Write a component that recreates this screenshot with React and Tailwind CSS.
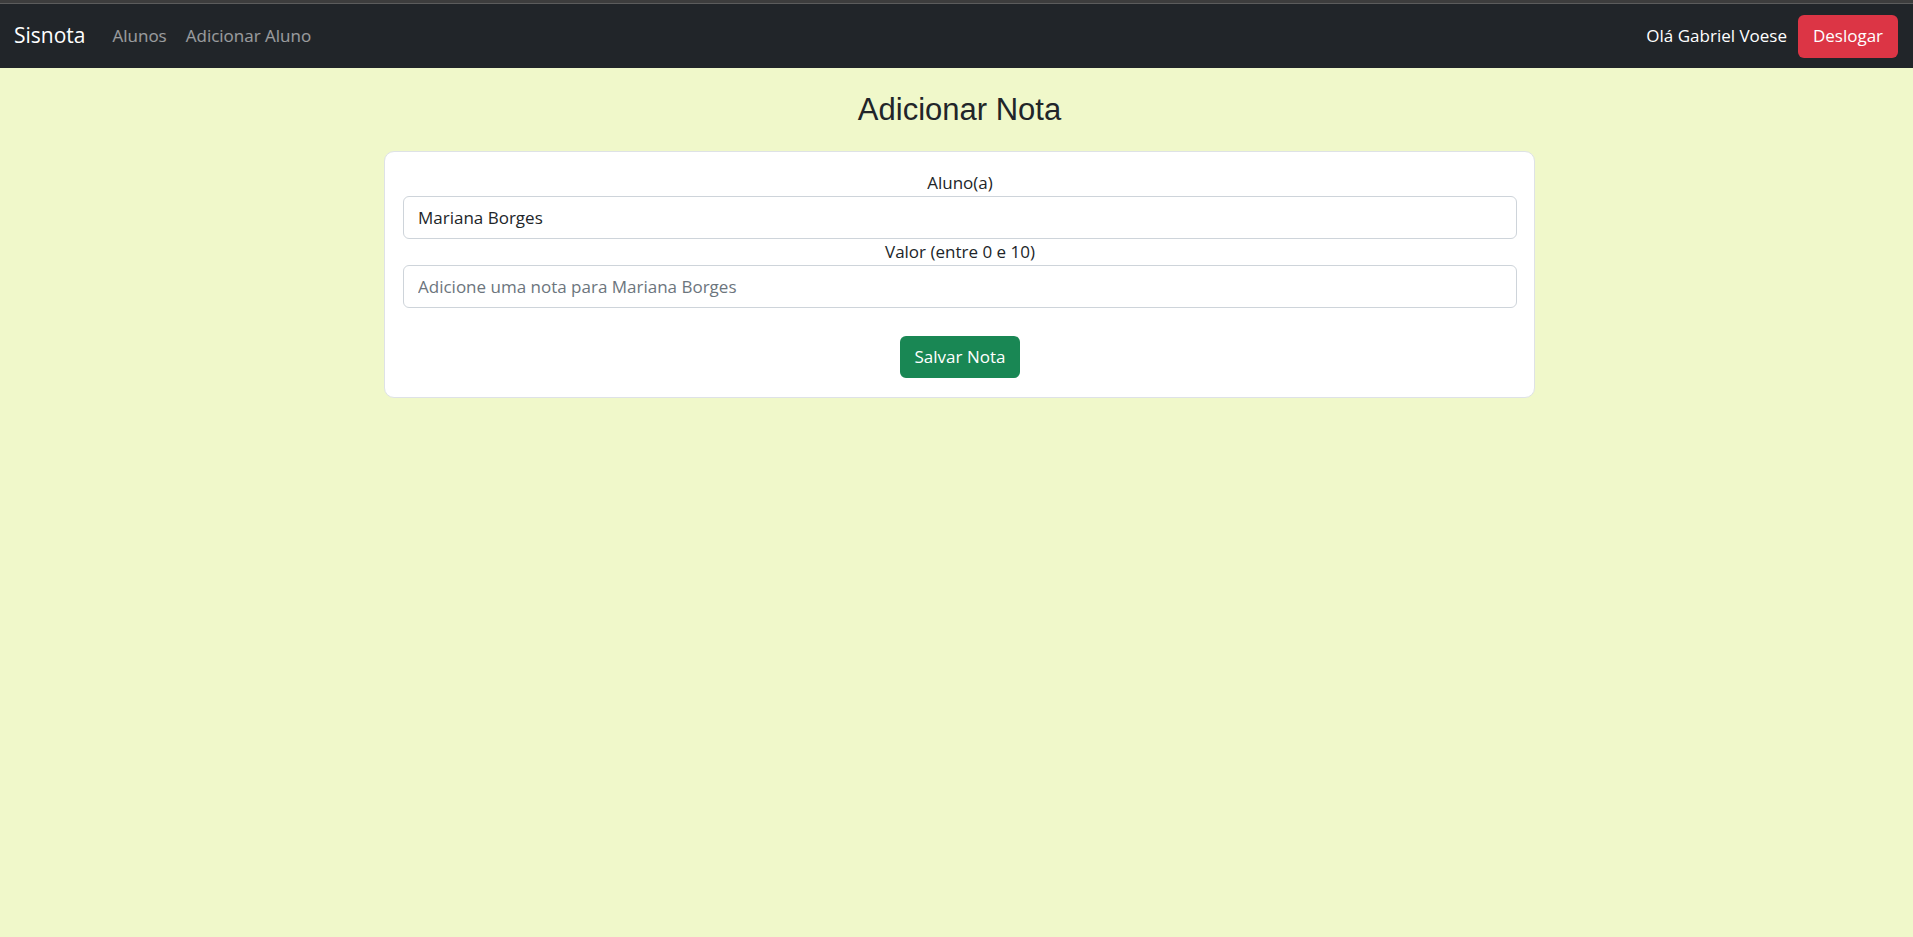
import React from 'react';

const body = { fontFamily: '"Open Sans", "Noto Sans", sans-serif' };

const Navbar = () => (
  <div>
    <div className="h-[3px] bg-[#3d3d3d]" />
    <div className="h-px bg-[#5c5c5c]" />
    <nav className="h-[64px] bg-[#212529] flex items-center justify-between pl-[14px] pr-[15px]">
      <div className="flex items-center">
        <span className="text-[21px] text-white mr-[27px]">Sisnota</span>
        <a className="text-[17px] text-white/55 mr-[19px]">Alunos</a>
        <a className="text-[17px] text-white/55">Adicionar Aluno</a>
      </div>
      <div className="flex items-center">
        <span className="text-[17px] text-white mr-[11px]">Olá Gabriel Voese</span>
        <button className="h-[43px] w-[100px] rounded-[6px] bg-[#dc3545] text-white text-[17px]">
          Deslogar
        </button>
      </div>
    </nav>
  </div>
);

const Field = ({ label, value, placeholder }) => (
  <div className="flex flex-col">
    <label className="text-center text-[17px] leading-[26px] text-[#212529]">{label}</label>
    <input
      readOnly
      value={value || ''}
      placeholder={placeholder}
      className="h-[43px] w-full border border-[#ced4da] rounded-[6px] bg-white px-[14px] text-[17px] text-[#212529] placeholder:text-[#6c757d] outline-none"
    />
  </div>
);

export default function App() {
  return (
    <div className="min-h-[937px] bg-[#f0f8ca]" style={body}>
      <Navbar />
      <main className="flex flex-col items-center pl-[6px]">
        <h1
          className="mt-[23px] text-[31px] leading-[37px] text-[#212529]"
          style={{ fontFamily: '"Liberation Sans", Arial, sans-serif' }}
        >
          Adicionar Nota
        </h1>
        <div className="mt-[23px] w-[1151px] bg-white border border-[#dee2e6] rounded-[10px] pt-[18px] pb-[19px] pl-[18px] pr-[17px]">
          <Field label="Aluno(a)" value="Mariana Borges" />
          <Field label="Valor (entre 0 e 10)" placeholder="Adicione uma nota para Mariana Borges" />
          <div className="flex justify-center mt-[28px]">
            <button className="h-[42px] w-[120px] rounded-[6px] bg-[#198754] text-white text-[17px]">
              Salvar Nota
            </button>
          </div>
        </div>
      </main>
    </div>
  );
}
